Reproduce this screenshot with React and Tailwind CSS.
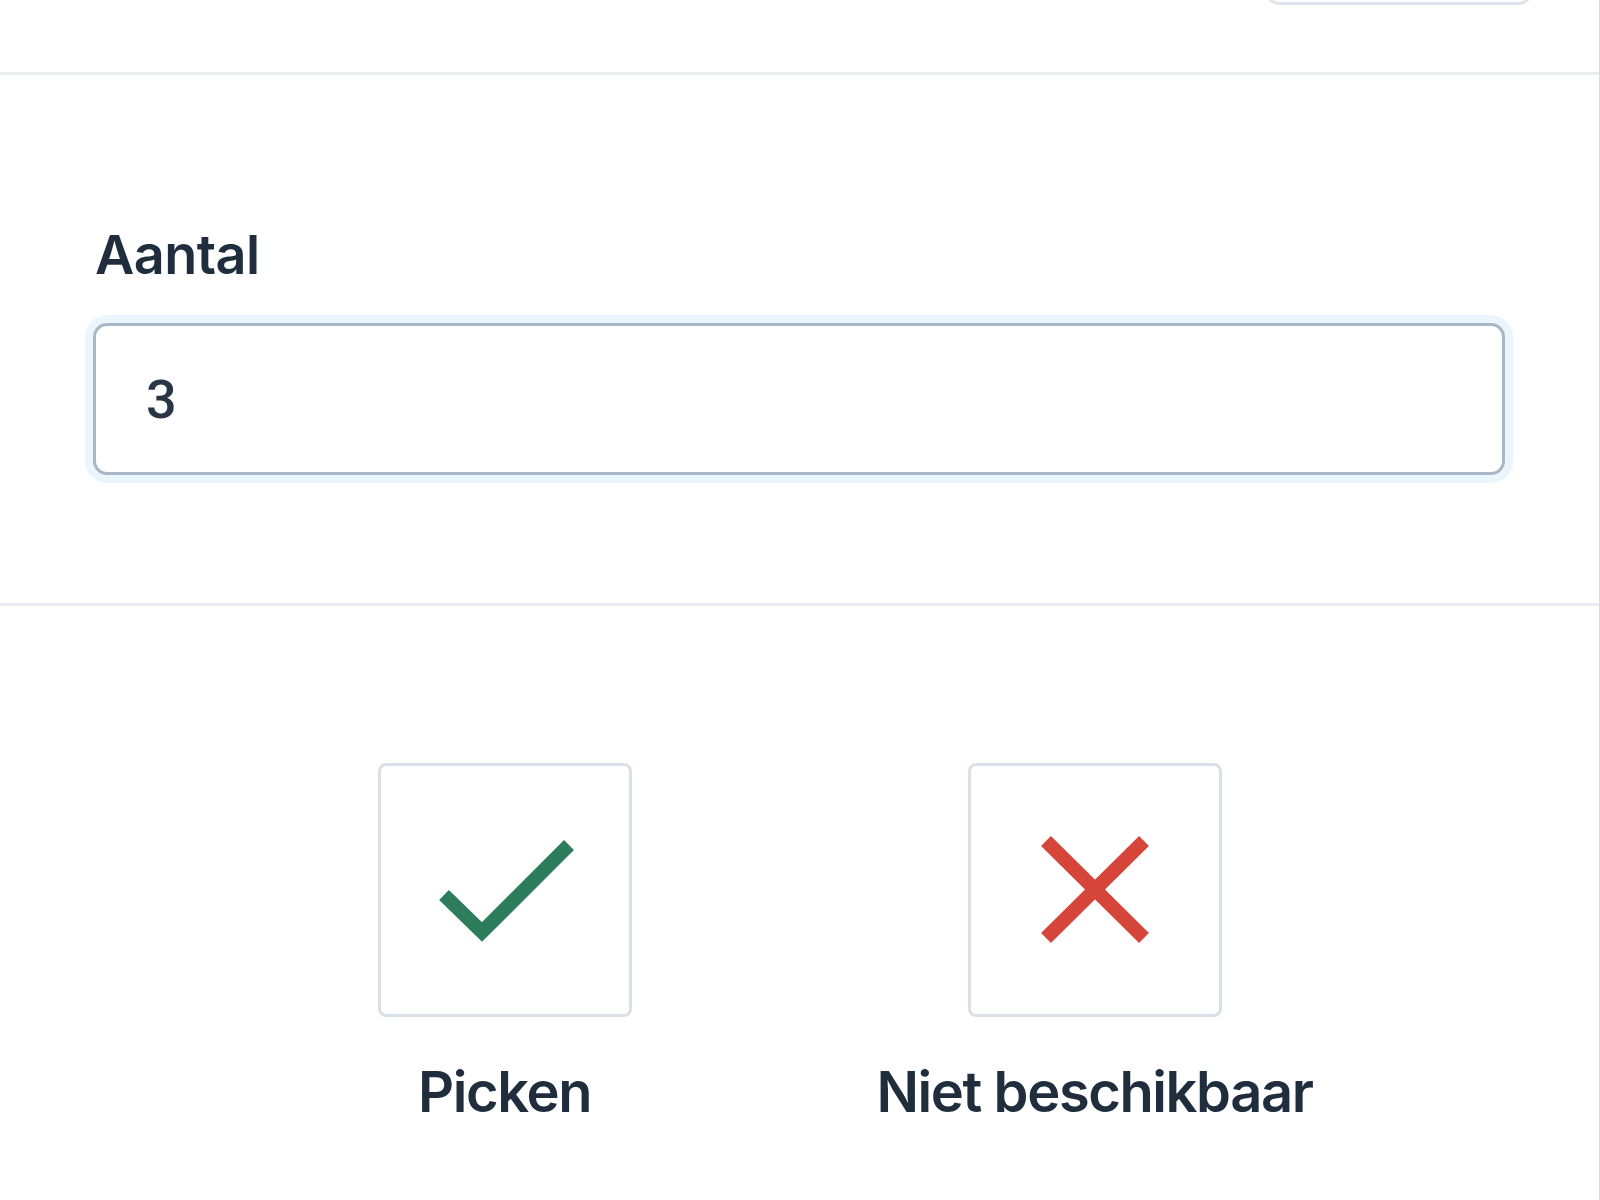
import React from "react";

function CheckIcon() {
  return (
    <svg width="248" height="248" viewBox="0 0 248 248" fill="none">
      <polyline
        points="63,129 101,166 188,79"
        stroke="#2d7d5c"
        strokeWidth="14"
        strokeLinecap="butt"
        strokeLinejoin="miter"
      />
    </svg>
  );
}

function CrossIcon() {
  return (
    <svg width="248" height="248" viewBox="0 0 248 248" fill="none">
      <line x1="75" y1="75" x2="173" y2="172" stroke="#d6453a" strokeWidth="14" />
      <line x1="173" y1="75" x2="75" y2="172" stroke="#d6453a" strokeWidth="14" />
    </svg>
  );
}

export default function App() {
  const actions = [
    { id: "pick", label: "Picken", icon: <CheckIcon /> },
    { id: "na", label: "Niet beschikbaar", icon: <CrossIcon /> },
  ];

  return (
    <div className="w-[1600px] h-[1200px] bg-white border-r border-[#d5dce4] overflow-hidden text-[#1f2d3d] font-['Inter','Liberation_Sans',sans-serif]">
      {/* Header with the bottom of a button peeking in */}
      <div className="h-[75px] flex justify-end pr-[65px] border-b-[3px] border-[#e8edf2]">
        <button className="w-[270px] h-[80px] -mt-[75px] rounded-[16px] border-[3px] border-[#dde4ec] bg-white" />
      </div>

      {/* Quantity */}
      <div className="h-[531px] pt-[153px] pl-[93px] pr-[95px] border-b-[3px] border-[#e8edf2]">
        <label className="block pl-[2px] text-[54px] leading-none font-semibold tracking-[-0.01em] mb-[41px]">
          Aantal
        </label>
        <input
          readOnly
          value="3"
          className="w-[1412px] h-[152px] rounded-[14px] border-[3px] border-[#a9b6c6] bg-white pl-[50px] text-[54px] font-medium text-[#2a3645] font-['Roboto','Liberation_Sans',sans-serif] outline-none shadow-[0_0_0_8px_#ebf5fc]"
        />
      </div>

      {/* Actions */}
      <div className="pt-[157px] flex justify-center">
        {actions.map((a) => (
          <div key={a.id} className="w-[590px] flex flex-col items-center">
            <button className="w-[254px] h-[254px] rounded-[8px] border-[3px] border-[#d9e0e8] bg-white flex items-center justify-center">
              {a.icon}
            </button>
            <span className="mt-[47px] text-[56px] leading-none font-semibold tracking-[-0.025em]">
              {a.label}
            </span>
          </div>
        ))}
      </div>
    </div>
  );
}
